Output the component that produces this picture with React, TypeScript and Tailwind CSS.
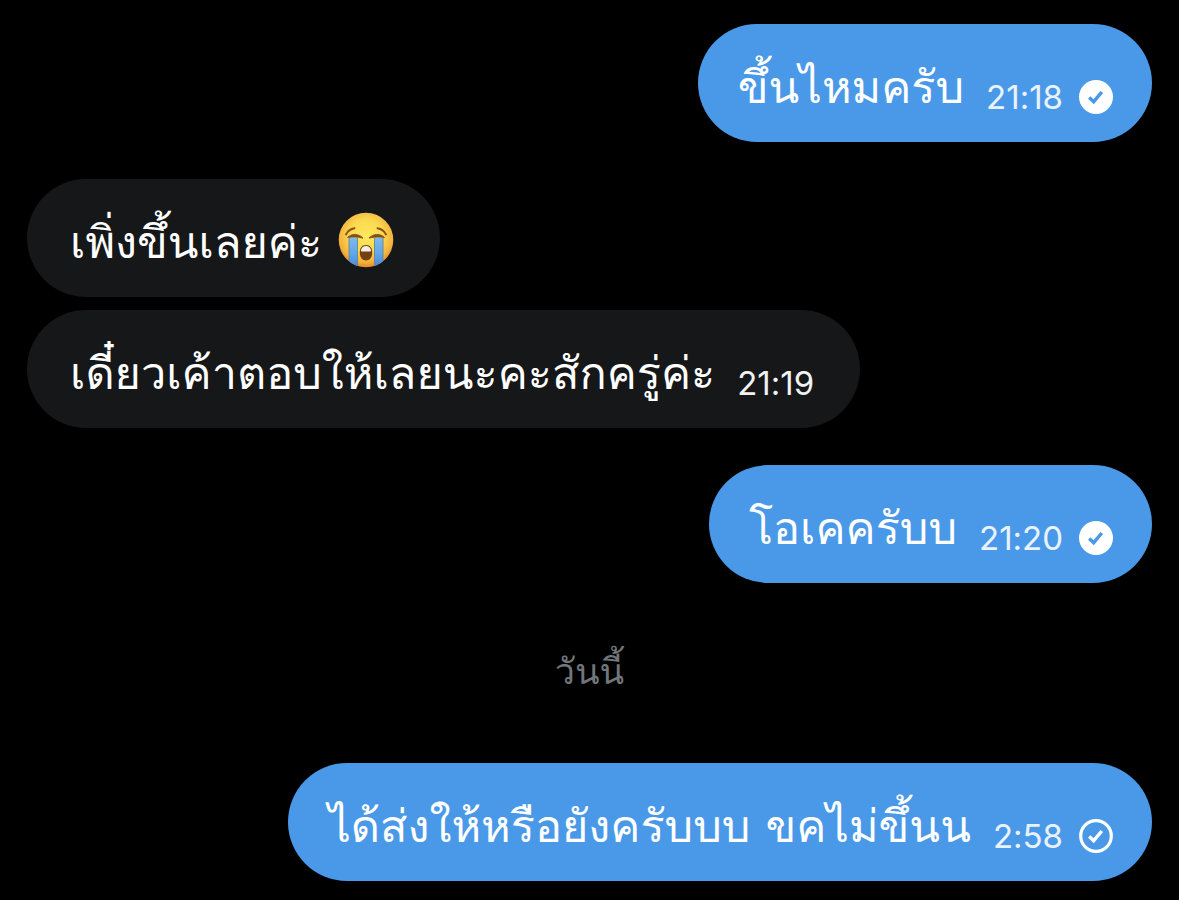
import React from 'react';

type Status = 'read' | 'sent';

interface Message {
  id: number;
  text: string;
  outgoing: boolean;
  time?: string;
  status?: Status;
  crying?: boolean;
}

const yesterday: Message[][] = [
  [{ id: 1, text: 'ขึ้นไหมครับ', outgoing: true, time: '21:18', status: 'read' }],
  [
    { id: 2, text: 'เพิ่งขึ้นเลยค่ะ', outgoing: false, crying: true },
    { id: 3, text: 'เดี๋ยวเค้าตอบให้เลยนะคะสักครู่ค่ะ', outgoing: false, time: '21:19' },
  ],
  [{ id: 4, text: 'โอเคครับบ', outgoing: true, time: '21:20', status: 'read' }],
];

const today: Message[][] = [
  [{ id: 5, text: 'ได้ส่งให้หรือยังครับบบ ขคไม่ขึ้นน', outgoing: true, time: '2:58', status: 'sent' }],
];

function StatusIcon({ status }: { status: Status }) {
  const read = status === 'read';
  return (
    <svg viewBox="0 0 34 34" className="size-[34px] shrink-0" role="img" aria-label={read ? 'อ่านแล้ว' : 'ส่งแล้ว'}>
      <circle cx="17" cy="17" r={read ? 17 : 15.3} fill={read ? '#fff' : 'none'} stroke="#fff" strokeWidth={read ? 0 : 3.2} />
      <path d="M10.2 17.4 14.7 21.7 22.8 12" fill="none" stroke={read ? '#4a99e9' : '#fff'} strokeWidth="3.4" />
    </svg>
  );
}

function CryingFace() {
  return (
    <svg viewBox="0 0 56 56" className="size-14 shrink-0" role="img" aria-label="😭">
      <defs>
        <radialGradient id="face" cx="0.5" cy="0.42" r="0.6">
          <stop offset="0" stopColor="#fde85e" />
          <stop offset="0.5" stopColor="#fbd950" />
          <stop offset="0.82" stopColor="#f4b13d" />
          <stop offset="1" stopColor="#dd811f" />
        </radialGradient>
        <linearGradient id="tear" x1="0" y1="0" x2="0" y2="1">
          <stop offset="0" stopColor="#7db8ec" />
          <stop offset="0.5" stopColor="#62a8ea" />
          <stop offset="1" stopColor="#4588dc" />
        </linearGradient>
        <clipPath id="head">
          <circle cx="28" cy="28" r="27.3" />
        </clipPath>
      </defs>
      <circle cx="28" cy="28" r="27.3" fill="url(#face)" />
      <g clipPath="url(#head)">
        <path d="M11 25.5h8.5v30.5H11zM36.5 25.5H45v30.5h-8.5z" fill="url(#tear)" />
        <path d="M11 26v30M19.5 26v30M36.5 26v30M45 26v30" stroke="#5c7f96" strokeWidth="0.8" />
      </g>
      <path d="M9.5 25.5c4.3-4.6 11.5-3.8 15.5.6-4.8-1.2-10.5-1.6-15.5-.6zM46.5 25.5c-4.3-4.6-11.5-3.8-15.5.6 4.8-1.2 10.5-1.6 15.5-.6z" fill="#81501a" stroke="#81501a" strokeWidth="0.9" strokeLinejoin="round" />
      <path d="M8 22.5c1.7-3.6 4.8-5.7 8.5-6.3M48 22.5c-1.7-3.6-4.8-5.7-8.5-6.3" fill="none" stroke="#8a5215" strokeWidth="1.9" strokeLinecap="round" />
      <path d="M28 33c-4.300 0-6.200 3.300-6.200 7.400 0 4.800 2.300 8 6.200 8s6.200-3.200 6.200-8c0-4.100-1.900-7.400-6.200-7.400z" fill="#754010" />
      <path d="M23 38c.8-2.700 2.500-4 5-4s4.200 1.300 5 4c.3 1-.3 1.500-1.300 1.500h-7.400c-1 0-1.600-.5-1.300-1.500z" fill="#f1efe9" />
    </svg>
  );
}

function Bubble({ message }: { message: Message }) {
  const { text, outgoing, time, status, crying } = message;
  return (
    <li
      className={
        outgoing
          ? 'flex max-w-full items-center rounded-[59px] bg-[#4a99e9] pt-5 pr-[39px] pb-6 pl-10'
          : 'flex max-w-full items-center rounded-[59px] bg-[#161719] pt-5 pr-[46px] pb-6 pl-[43px]'
      }
    >
      <p className="pt-3 text-[45px] leading-[62px] text-white">{text}</p>
      {crying && (
        <span className="pt-2 pl-4">
          <CryingFace />
        </span>
      )}
      {time && (
        <div className={outgoing ? 'mt-8 ml-[22px] flex items-center gap-4' : 'mt-8 ml-[22px] flex items-center'}>
          <time
            className={
              outgoing
                ? 'font-[Inter] text-[33px] leading-[42px] text-[#e9f3fd] [font-feature-settings:"calt"_0]'
                : 'font-[Inter] text-[33px] leading-[42px] text-[#f1f1f2] [font-feature-settings:"calt"_0]'
            }
          >
            {time}
          </time>
          {status && <StatusIcon status={status} />}
        </div>
      )}
    </li>
  );
}

function Group({ messages }: { messages: Message[] }) {
  return (
    <ul className={messages[0].outgoing ? 'flex flex-col items-end gap-[13px]' : 'flex flex-col items-start gap-[13px]'}>
      {messages.map((m) => (
        <Bubble key={m.id} message={m} />
      ))}
    </ul>
  );
}

export default function App() {
  return (
    <main className="flex min-h-screen flex-col gap-[37px] bg-black px-[27px] pt-6 pb-[19px] font-[Loma,Garuda,sans-serif]">
      {yesterday.map((g) => (
        <Group key={g[0].id} messages={g} />
      ))}
      <h2 className="pt-[22px] pb-6 text-center text-[36px] leading-[60px] text-[#71767b]">วันนี้</h2>
      {today.map((g) => (
        <Group key={g[0].id} messages={g} />
      ))}
    </main>
  );
}
